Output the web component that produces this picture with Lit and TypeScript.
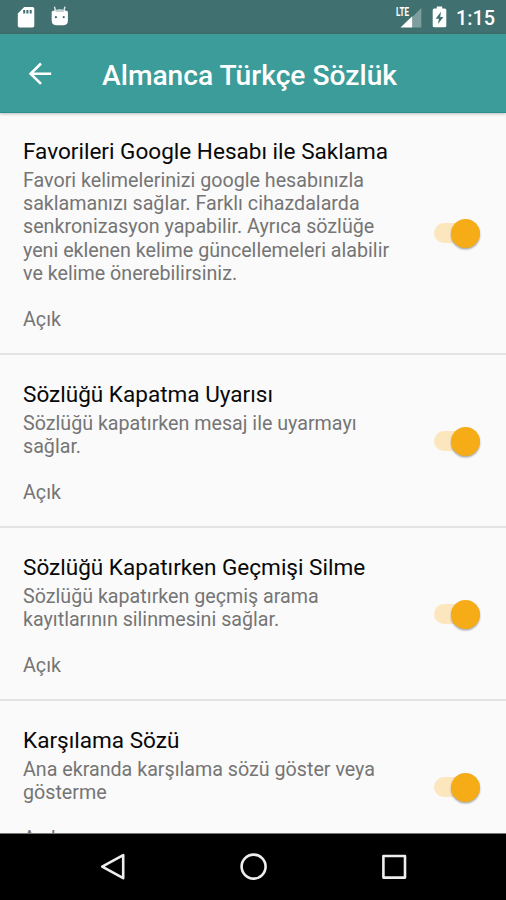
import { LitElement, html, svg, css } from "lit";
import { customElement, property } from "lit/decorators.js";

interface Preference {
  title: string;
  lines: string[];
  state: string;
}

const PREFERENCES: Preference[] = [
  {
    title: "Favorileri Google Hesabı ile Saklama",
    lines: [
      "Favori kelimelerinizi google hesabınızla",
      "saklamanızı sağlar. Farklı cihazdalarda",
      "senkronizasyon yapabilir. Ayrıca sözlüğe",
      "yeni eklenen kelime güncellemeleri alabilir",
      "ve kelime önerebilirsiniz.",
    ],
    state: "Açık",
  },
  {
    title: "Sözlüğü Kapatma Uyarısı",
    lines: ["Sözlüğü kapatırken mesaj ile uyarmayı", "sağlar."],
    state: "Açık",
  },
  {
    title: "Sözlüğü Kapatırken Geçmişi Silme",
    lines: ["Sözlüğü kapatırken geçmiş arama", "kayıtlarının silinmesini sağlar."],
    state: "Açık",
  },
  {
    title: "Karşılama Sözü",
    lines: ["Ana ekranda karşılama sözü göster veya", "gösterme"],
    state: "Açık",
  },
];

@customElement("status-bar")
class StatusBar extends LitElement {
  static styles = css`
    :host {
      display: flex;
      align-items: center;
      height: 34px;
      flex: none;
      padding: 0 10px 0 17px;
      box-sizing: border-box;
      background: #40706f;
      color: #fff;
    }
    svg {
      display: block;
      flex: none;
    }
    .droid {
      margin-left: 16px;
    }
    .signal {
      margin-left: auto;
    }
    .battery {
      margin-left: 10px;
    }
    .clock {
      width: 40px;
      margin-left: 9px;
      font: 500 19.9px/34px Roboto, sans-serif;
      white-space: nowrap;
      padding-top: 3px;
    }
    .lte {
      font: 700 12px Roboto, sans-serif;
    }
  `;
  render() {
    return html`
      <svg width="18" height="34" viewBox="0 0 18 34">
        <path
          fill="#fff"
          fill-rule="evenodd"
          d="M7.2 7H15.5Q17.3 7 17.3 8.8V25.7Q17.3 27.5 15.5 27.5H2.6Q.8 27.5 .8 25.7V13.4ZM6.2 10V13.6H8.2V10ZM9.4 10V13.6H11.4V10ZM12.7 10V13.6H14.7V10Z"
        />
      </svg>
      <svg class="droid" width="18" height="34" viewBox="0 0 18 34">
        <path d="M4.6 11 3.4 6.6M12.8 11 14 6.6" stroke="#dfe9e9" stroke-width="1.4" fill="none" />
        <path
          fill="#fff"
          d="M.7 11.5Q4 9.6 8.8 9.6T16.9 11.5V20.5Q16.9 25.3 12.1 25.3H5.5Q.7 25.3 .7 20.5Z"
        />
        <path fill="#c5d3d3" d="M4 10.2Q8.8 8.6 13.6 10.2L12.8 12H4.8Z" />
        <circle cx="4.9" cy="17.2" r="1.1" fill="#40706f" />
        <circle cx="12.7" cy="17.2" r="1.1" fill="#40706f" />
      </svg>
      <svg class="signal" width="27" height="34" viewBox="0 0 27 34">
        <path d="M26.3 8V27.5H17.2V17.1Z" fill="#7f9f9e" />
        <path d="M17.2 16.2V27.5H5.5Z" fill="#fff" />
        <text class="lte" x="1" y="16.3" fill="#fff" textLength="13" lengthAdjust="spacingAndGlyphs">LTE</text>
      </svg>
      <svg class="battery" width="15" height="34" viewBox="0 0 15 34">
        <path
          fill="#fff"
          fill-rule="evenodd"
          d="M4.8 6.4H10.2V8.4H12.7Q14.3 8.4 14.3 10V25.7Q14.3 27.3 12.7 27.3H2.3Q.7 27.3 .7 25.7V10Q.7 8.4 2.3 8.4H4.8ZM9 11.8 3.6 18.8H6.9L6 24 11.4 16.9H8.2Z"
        />
      </svg>
      <div class="clock">1:15</div>
    `;
  }
}

@customElement("app-bar")
class AppBar extends LitElement {
  @property() heading = "";
  static styles = css`
    :host {
      display: flex;
      align-items: center;
      flex: none;
      height: 79px;
      padding-left: 28px;
      box-sizing: border-box;
      background: #3b9c99;
      border-bottom: 1px solid #2a8f8c;
      box-shadow: 0 1px 3px rgba(0, 0, 0, 0.25);
      z-index: 1;
      color: #fff;
    }
    .title {
      margin-left: 50px;
      padding-top: 5px;
      font: 500 28.2px/34px Roboto, sans-serif;
      white-space: nowrap;
    }
  `;
  render() {
    return html`
      <svg width="24" height="24" viewBox="0 0 24 24" fill="none" stroke="#fff" stroke-width="2.6">
        <path d="M23.2 12.7H3M13 2.5 2.6 12.7 13 22.9" />
      </svg>
      <div class="title">${this.heading}</div>
    `;
  }
}

@customElement("toggle-switch")
class ToggleSwitch extends LitElement {
  static styles = css`
    :host {
      display: flex;
      align-items: center;
      justify-content: flex-end;
      width: 46px;
      height: 20px;
      flex: none;
      margin-bottom: 1.6px;
      border-radius: 10px;
      background: #fce6bd;
    }
    .thumb {
      width: 29px;
      height: 29px;
      flex: none;
      border-radius: 50%;
      background: #f6ac17;
      box-shadow: 0 1.5px 2px rgba(0, 0, 0, 0.32);
    }
  `;
  render() {
    return html`<div class="thumb"></div>`;
  }
}

@customElement("preference-row")
class PreferenceRow extends LitElement {
  @property({ attribute: false }) item!: Preference;
  static styles = css`
    :host {
      display: flex;
      align-items: center;
      justify-content: space-between;
      flex: none;
      box-sizing: border-box;
      padding: 25.1px 26px 21.3px 23px;
      border-bottom: 2px solid #e3e3e3;
      font-family: Roboto, sans-serif;
      white-space: nowrap;
    }
    .title {
      font-size: 22.55px;
      line-height: 29px;
      padding-bottom: 2.9px;
      color: #080808;
    }
    .line {
      font-size: 19.68px;
      line-height: 23.2px;
      color: #757575;
    }
    .state {
      margin-top: 23.2px;
    }
  `;
  render() {
    return html`
      <div>
        <div class="title">${this.item.title}</div>
        ${this.item.lines.map((l) => html`<div class="line">${l}</div>`)}
        <div class="line state">${this.item.state}</div>
      </div>
      <toggle-switch></toggle-switch>
    `;
  }
}

@customElement("nav-bar")
class NavBar extends LitElement {
  static styles = css`
    :host {
      display: flex;
      align-items: center;
      justify-content: center;
      gap: 112px;
      flex: none;
      height: 67px;
      padding-left: 1px;
      background: #000;
      border-top: 1px solid #777;
      box-sizing: border-box;
    }
  `;
  render() {
    const icon = (shape: unknown) => html`
      <svg width="28" height="28" viewBox="0 0 28 28" fill="none" stroke="#eee" stroke-width="2.6" stroke-linejoin="round">
        ${shape}
      </svg>
    `;
    return html`
      ${icon(svg`<path d="M23.2 2.2V25.2L2.2 13.7Z" />`)}
      ${icon(svg`<circle cx="13.6" cy="13.6" r="12" />`)}
      ${icon(svg`<rect x="3.4" y="3" width="21.6" height="21.6" />`)}
    `;
  }
}

@customElement("app-root")
class AppRoot extends LitElement {
  static styles = css`
    :host {
      display: flex;
      flex-direction: column;
      width: 506px;
      height: 900px;
      overflow: hidden;
      background: #fafafa;
    }
    .list {
      display: flex;
      flex-direction: column;
      flex: 1;
      min-height: 0;
      margin-top: -1px;
      overflow: hidden;
    }
  `;
  render() {
    return html`
      <status-bar></status-bar>
      <app-bar heading="Almanca Türkçe Sözlük"></app-bar>
      <div class="list">
        ${PREFERENCES.map((p) => html`<preference-row .item=${p}></preference-row>`)}
      </div>
      <nav-bar></nav-bar>
    `;
  }
}
